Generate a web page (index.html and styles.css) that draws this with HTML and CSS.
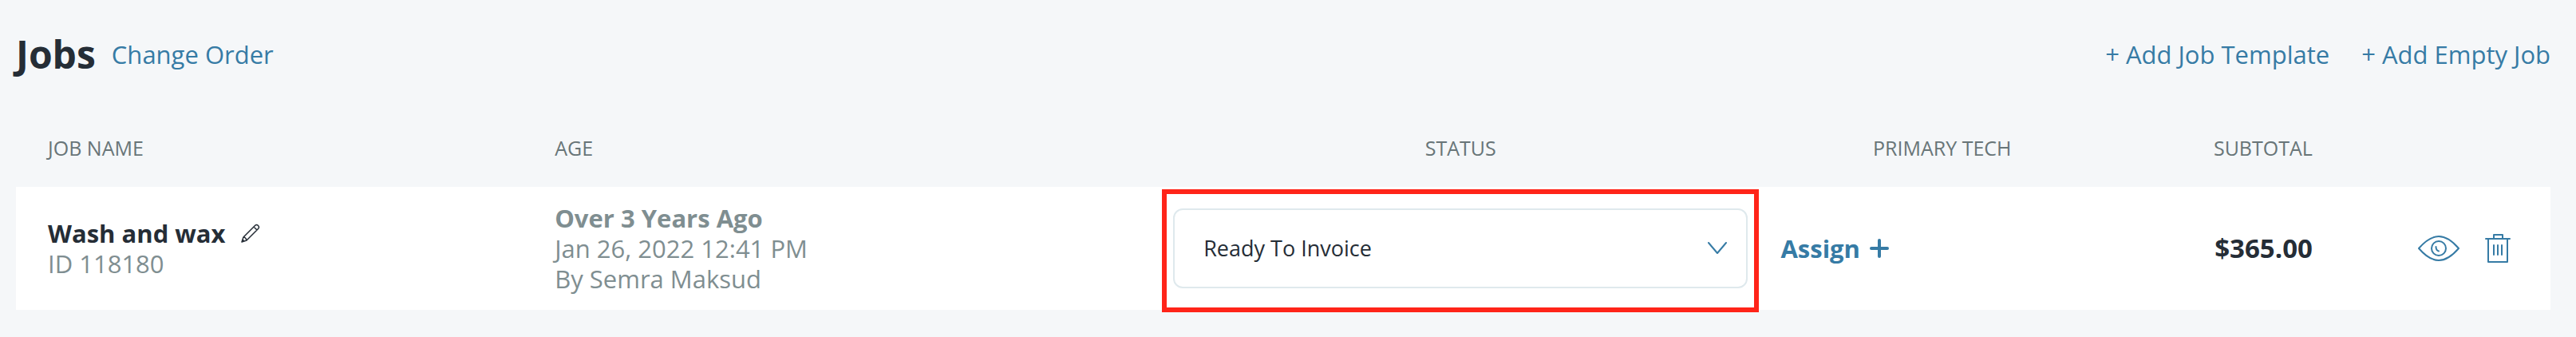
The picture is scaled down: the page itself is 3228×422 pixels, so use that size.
FILE: index.html
```html
<!DOCTYPE html>
<html lang="en">
<head>
  <meta charset="UTF-8">
  <meta name="viewport" content="width=device-width, initial-scale=1.0">
  <title>Jobs</title>
  <link rel="stylesheet" href="styles.css">
</head>
<body>

  <header class="jobs-header">
    <h1>Jobs</h1>
    <a href="#" class="link">Change Order</a>
    <nav class="jobs-actions">
      <a href="#" class="link"><span class="plus">+</span> Add Job Template</a>
      <a href="#" class="link"><span class="plus">+</span> Add Empty Job</a>
    </nav>
  </header>

  <table class="jobs-table">
    <thead>
      <tr>
        <th class="col-name">Job Name</th>
        <th class="col-age">Age</th>
        <th class="col-status" id="status-label">Status</th>
        <th class="col-tech">Primary Tech</th>
        <th class="col-subtotal">Subtotal</th>
        <th class="col-actions"></th>
      </tr>
    </thead>
    <tbody>
      <tr>
        <td class="col-name">
          <div class="job-title">
            <strong>Wash and wax</strong>
            <button type="button" class="icon-btn" aria-label="Edit job name">
              <svg width="24" height="24" viewBox="0 0 24 24" fill="none" stroke="#252d36" stroke-width="1.5" stroke-linejoin="round">
                <path d="M1 23 L3 17 L17.5 2.5 Q19.5 0.5 21.5 2.5 Q23.5 4.5 21.5 6.5 L7 21 Z M3 17 Q6 17 7 21 M16 4 L20 8 M1 23 L3.5 20.5"/>
              </svg>
            </button>
          </div>
          <div class="muted">ID 118180</div>
        </td>
        <td class="col-age muted">
          <strong>Over 3 Years Ago</strong>
          <div>Jan 26, 2022 12:41 PM</div>
          <div>By Semra Maksud</div>
        </td>
        <td class="col-status">
          <div class="status-field">
            <select aria-labelledby="status-label">
              <option>Ready To Invoice</option>
            </select>
            <svg class="chevron" width="24" height="16" viewBox="0 0 24 16" fill="none" stroke="#367ba5" stroke-width="2" stroke-linecap="round" stroke-linejoin="round">
              <path d="M1 1 L12 14 L23 1"/>
            </svg>
          </div>
        </td>
        <td class="col-tech">
          <button type="button" class="assign-btn">
            Assign
            <svg width="24" height="24" viewBox="0 0 24 24" fill="none" stroke="#367ba5" stroke-width="4" stroke-linecap="round">
              <path d="M12 2 V22 M2 12 H22"/>
            </svg>
          </button>
        </td>
        <td class="col-subtotal"><strong>$365.00</strong></td>
        <td class="col-actions">
          <div class="row-actions">
            <button type="button" class="icon-btn" aria-label="View job">
              <svg width="52" height="32" viewBox="0 0 52 32" fill="none" stroke="#367ba5" stroke-width="2" stroke-linecap="round" stroke-linejoin="round">
                <path d="M1 16 Q14 1 26 1 Q38 1 51 16 Q38 31 26 31 Q14 31 1 16 Z"/>
                <circle cx="26" cy="16" r="9"/>
                <path d="M22.5 14 Q22.5 18.5 26 19.5"/>
              </svg>
            </button>
            <button type="button" class="icon-btn" aria-label="Delete job">
              <svg width="32" height="36" viewBox="0 0 32 36" fill="none" stroke="#367ba5" stroke-width="2" stroke-linecap="round" stroke-linejoin="round">
                <path d="M1 6 H31 M4 6 V35 H28 V6 M11 6 V1 H22 V6 M11 14 V26 M16 14 V26 M21 14 V26"/>
              </svg>
            </button>
          </div>
        </td>
      </tr>
    </tbody>
  </table>

</body>
</html>
```
FILE: styles.css
```css
* {
  box-sizing: border-box;
}

body {
  margin: 0;
  padding: 40px 32px 34px 20px;
  background-color: #f5f7f9;
  color: #252d36;
  font-family: 'Open Sans', 'Noto Sans', sans-serif;
  font-size: 31px;
  font-weight: 400;
  line-height: 38px;
}

strong {
  font-weight: 700;
}

.jobs-header {
  display: flex;
  align-items: center;
  gap: 20px;
}

h1 {
  margin: 0;
  font-size: 48px;
  line-height: 56px;
}

.link {
  color: #367ba5;
  text-decoration: none;
}

.jobs-actions {
  display: flex;
  gap: 40px;
  margin-left: auto;
}

.jobs-table {
  width: 100%;
  margin-top: 40px;
  border-collapse: collapse;
  table-layout: fixed;
}

th {
  height: 98px;
  padding: 0 40px;
  color: #687578;
  font-size: 25px;
  font-weight: 400;
  text-align: left;
  text-transform: uppercase;
}

td {
  height: 154px;
  padding: 0 40px;
  background-color: #fff;
}

.col-name {
  width: 20%;
}

.col-age {
  width: 25%;
}

.col-status {
  width: 24%;
  padding: 0 21px;
}

.col-tech {
  width: 14%;
  padding: 0 20px;
}

.col-subtotal {
  width: 9%;
  padding: 0 44px 0 0;
  text-align: right;
}

.col-subtotal strong {
  font-size: 33px;
}

.col-actions {
  width: 8%;
  padding: 0 50px 0 0;
}

th.col-status,
th.col-tech {
  text-align: center;
}

.muted {
  color: #7f8e91;
}

.job-title {
  display: flex;
  align-items: center;
  gap: 20px;
}

.icon-btn,
.assign-btn {
  display: flex;
  align-items: center;
  padding: 0;
  border: none;
  background: none;
  cursor: pointer;
}

.assign-btn {
  gap: 12px;
  color: #367ba5;
  font: inherit;
  font-weight: 700;
}

.status-field {
  position: relative;
}

/* red highlight around the status drop-down */
.status-field::after {
  content: '';
  position: absolute;
  inset: -24px -14px -30px;
  border: 6px solid #ff2419;
  pointer-events: none;
}

select {
  display: block;
  width: 100%;
  height: 100px;
  padding: 0 80px 0 36px;
  border: 2px solid #dfe9ed;
  border-radius: 12px;
  background-color: #fff;
  color: #252d36;
  font: inherit;
  font-size: 27px;
  appearance: none;
}

.chevron {
  position: absolute;
  top: 42px;
  right: 26px;
  pointer-events: none;
}

.row-actions {
  display: flex;
  align-items: center;
  justify-content: flex-end;
  gap: 32px;
}
```
